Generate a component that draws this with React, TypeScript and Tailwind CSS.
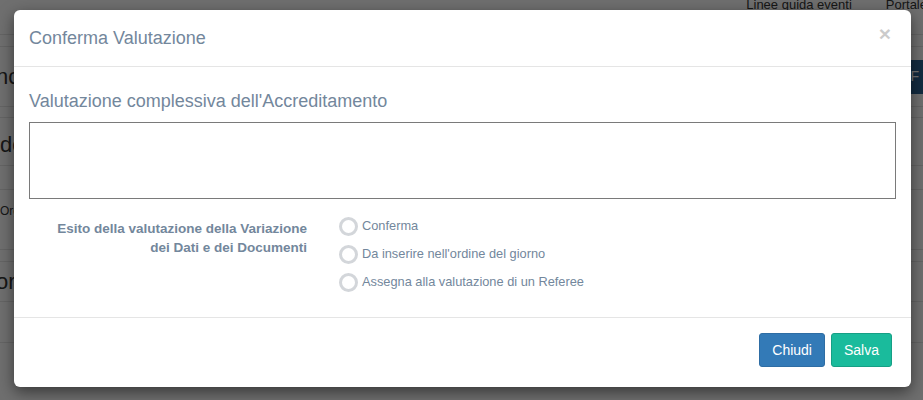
import React from 'react';

const options = ['Conferma', "Da inserire nell'ordine del giorno", 'Assegna alla valutazione di un Referee'];

function Radio({ label }: { label: string }) {
    return (
        <label className="flex h-[28px] items-center">
            <span className="box-border h-[19px] w-[19px] rounded-full border-[3px] border-[#d3d6da] bg-white" />
            <span className="ml-[4px] text-[12.8px] text-[#73879C]">{label}</span>
        </label>
    );
}

export default function App() {
    return (
        <div className="relative h-[400px] w-[923px] overflow-hidden bg-white font-['Liberation_Sans',Arial,sans-serif]">
            {/* page behind the modal */}
            <div className="h-full w-full bg-[#f7f7f7] text-[#333]">
                <div className="flex h-[35px] items-start justify-end gap-[34px] border-b border-[#ddd] pr-[2px] text-[13px] leading-none">
                    <span className="mt-[-2px] underline">Linee guida eventi</span>
                    <span className="mr-[-6px] mt-[-2px]">Portale</span>
                </div>
                <div className="mt-[11px] flex h-[61px] items-center justify-between border-b border-t border-[#ddd]">
                    <span className="ml-[-4px] text-[22px]">nc</span>
                    <span className="mr-[-10px] flex h-[34px] items-center rounded-[3px] bg-[#2a5f8e] pl-[14px] pr-[14px] text-[14px] text-white">F</span>
                </div>
                <div className="mt-[10px] flex h-[49px] items-center border-b border-t border-[#ddd] pt-[6px] text-[22px]">de</div>
                <div className="mt-[23px] h-[61px] border-b border-t border-[#ddd] pt-[12px] text-[12px]">Org</div>
                <div className="mt-[11px] flex h-[41px] items-center border-b border-t border-[#ddd] text-[22px]">
                    <span className="ml-[-4px]">or</span>
                </div>
                <div className="mt-[40px] border-t border-[#ddd]" />
            </div>
            <div className="absolute inset-0 bg-black/55" />

            {/* modal */}
            <div className="absolute left-[14px] top-[10px] w-[897px] rounded-[6px] bg-white shadow-[0_5px_15px_rgba(0,0,0,0.5)]">
                <div className="flex h-[57px] items-center justify-between border-b border-[#e5e5e5] px-[15px]">
                    <h4 className="text-[18px] text-[#73879C]">Conferma Valutazione</h4>
                    <button className="mr-[5px] mt-[-10px] text-[21px] font-bold leading-none text-black opacity-20">×</button>
                </div>
                <div className="h-[250px] px-[15px] pt-[24px]">
                    <div className="text-[18px] leading-[20px] text-[#73879C]">Valutazione complessiva dell'Accreditamento</div>
                    <textarea className="mt-[11px] box-border block h-[77px] w-full resize-none border border-[#7a7a7a] outline-none" />
                    <div className="mt-[13px] flex">
                        <div className="w-[278px] pt-[7px] text-right text-[13.5px] font-bold leading-[19px] text-[#73879C]">
                            Esito della valutazione della Variazione
                            <br />
                            dei Dati e dei Documenti
                        </div>
                        <div className="ml-[32px] flex flex-col">
                            {options.map(o => (
                                <Radio key={o} label={o} />
                            ))}
                        </div>
                    </div>
                </div>
                <div className="flex h-[70px] items-start justify-end gap-[6px] border-t border-[#e5e5e5] pr-[19px] pt-[15px]">
                    <button className="h-[34px] rounded-[3px] border border-[#2e6da4] bg-[#337ab7] px-[12px] text-[14px] text-white">Chiudi</button>
                    <button className="h-[34px] rounded-[3px] border border-[#169F85] bg-[#1ABB9C] px-[12px] text-[14px] text-white">Salva</button>
                </div>
            </div>
        </div>
    );
}
